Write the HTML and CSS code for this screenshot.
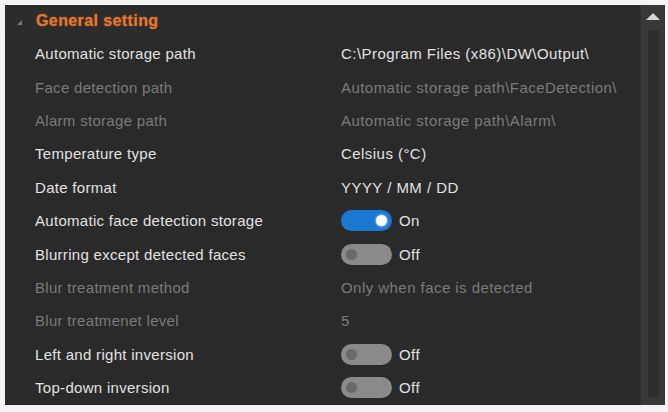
FILE: index.html
```html
<!DOCTYPE html>
<html>
<head>
<meta charset="utf-8">
<link rel="stylesheet" href="styles.css">
</head>
<body>
<div class="panel">
  <div class="content">
    <div class="header"><span class="caret"></span><span class="title">General setting</span></div>
    <div class="row"><span class="label">Automatic storage path</span><span class="value">C:\Program Files (x86)\DW\Output\</span></div>
    <div class="row dis"><span class="label">Face detection path</span><span class="value">Automatic storage path\FaceDetection\</span></div>
    <div class="row dis"><span class="label">Alarm storage path</span><span class="value">Automatic storage path\Alarm\</span></div>
    <div class="row"><span class="label">Temperature type</span><span class="value">Celsius (°C)</span></div>
    <div class="row"><span class="label">Date format</span><span class="value">YYYY / MM / DD</span></div>
    <div class="row"><span class="label">Automatic face detection storage</span><span class="value"><span class="toggle on"><span class="knob"></span></span>On</span></div>
    <div class="row"><span class="label">Blurring except detected faces</span><span class="value"><span class="toggle"><span class="knob"></span></span>Off</span></div>
    <div class="row dis"><span class="label">Blur treatment method</span><span class="value">Only when face is detected</span></div>
    <div class="row dis"><span class="label">Blur treatmenet level</span><span class="value">5</span></div>
    <div class="row"><span class="label">Left and right inversion</span><span class="value"><span class="toggle"><span class="knob"></span></span>Off</span></div>
    <div class="row"><span class="label">Top-down inversion</span><span class="value"><span class="toggle"><span class="knob"></span></span>Off</span></div>
  </div>
  <div class="scrollbar">
    <div class="arrow"></div>
    <div class="thumb"></div>
  </div>
</div>
</body>
</html>
```
FILE: styles.css
```css
html, body {
  margin: 0;
  padding: 0;
  background: #f4f4f4;
  width: 668px;
  height: 412px;
  overflow: hidden;
}
body {
  padding: 5px 3px 7px 5px;
  box-sizing: border-box;
  font-family: "Liberation Sans", Arial, sans-serif;
}
.panel {
  display: flex;
  height: 400px;
  width: 660px;
  background: #2a2a2a;
}
.content {
  flex: 1;
  display: flex;
  flex-direction: column;
}
.header {
  height: 32px;
  flex: none;
  display: flex;
  align-items: center;
  background: #2c2c2d;
}
.caret {
  width: 0;
  height: 0;
  margin-left: 12px;
  margin-right: 14px;
  border-left: 5px solid transparent;
  border-bottom: 5px solid #777;
  margin-top: 3px;
}
.title {
  color: #e8782c;
  font-weight: bold;
  font-size: 16px;
  letter-spacing: 0.4px;
  text-shadow: 0 0 2px rgba(232, 120, 44, 0.5);
}
.row {
  height: 33.4px;
  flex: none;
  display: flex;
  align-items: center;
  font-size: 15px;
  color: #e2e2e2;
}
.label {
  width: 306px;
  padding-left: 30px;
  letter-spacing: 0.3px;
}
.value {
  display: flex;
  align-items: center;
  gap: 7px;
  letter-spacing: 0.45px;
}
.dis {
  color: #7b7b7b;
}
.toggle {
  width: 51px;
  height: 21px;
  border-radius: 11px;
  background: #8a8a8a;
  display: flex;
  align-items: center;
  padding: 0 5px;
  box-sizing: border-box;
}
.knob {
  width: 11px;
  height: 11px;
  border-radius: 50%;
  background: #6a6a6a;
}
.toggle.on {
  background: #1a78d2;
  justify-content: flex-end;
}
.toggle.on .knob {
  background: #ffffff;
  box-shadow: 0 0 3px #d8eeff;
}
.scrollbar {
  width: 24px;
  background: #383838;
  display: flex;
  flex-direction: column;
  align-items: center;
  border-left: 1px solid #303030;
}
.arrow {
  width: 0;
  height: 0;
  margin-top: 8px;
  border-left: 7px solid transparent;
  border-right: 7px solid transparent;
  border-bottom: 7px solid #d4d4d4;
}
.thumb {
  margin-top: 10px;
  width: 11px;
  flex: 1;
  margin-bottom: 8px;
  background: #2e2e2e;
}
```
